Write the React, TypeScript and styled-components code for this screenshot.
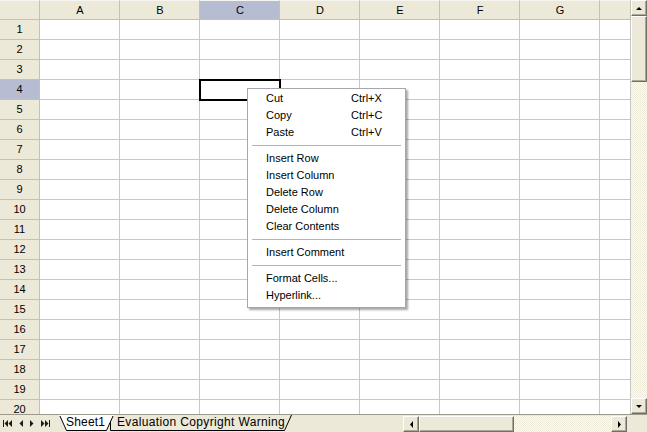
import React from "react";
import styled, { createGlobalStyle, css } from "styled-components";

const GlobalStyle = createGlobalStyle`
	html, body {
		margin: 0;
		padding: 0;
		overflow: hidden;
		background: #fff;
	}
	* {
		box-sizing: border-box;
	}
`;

const COLUMNS = ["A", "B", "C", "D", "E", "F", "G", ""];
const ROW_COUNT = 20;
const SEL_COL = 2;
const SEL_ROW = 4;

const Window = styled.div`
	width: 647px;
	height: 432px;
	display: flex;
	flex-direction: column;
	font-family: "Liberation Sans", Arial, sans-serif;
	background: #fff;
	overflow: hidden;
`;

const Main = styled.div`
	flex: 1;
	display: flex;
	min-height: 0;
`;

const SheetArea = styled.div`
	position: relative;
	width: 631px;
	overflow: hidden;
`;

const Grid = styled.div`
	display: grid;
	grid-template-columns: 40px repeat(7, 80px) 31px;
	grid-auto-rows: 20px;
`;

const headerBase = css<{ $active?: boolean }>`
	display: flex;
	align-items: center;
	justify-content: center;
	font-size: 11px;
	color: #000;
	background: ${(p) => (p.$active ? "#b6bdd2" : "#ece9d8")};
	border-right: 1px solid #c4c1b3;
	border-bottom: 1px solid #c4c1b3;
`;

const Corner = styled.div`
	${headerBase};
	border-top: 1px solid #f6f5ef;
`;

const ColHeader = styled.div<{ $active?: boolean }>`
	${headerBase};
	border-top: 1px solid #f6f5ef;
	padding-left: 1px;
`;

const RowHeader = styled.div<{ $active?: boolean }>`
	${headerBase};
	padding-bottom: 2px;
`;

const Cell = styled.div<{ $selected?: boolean }>`
	border-right: 1px solid #c8c8c8;
	border-bottom: 1px solid #c8c8c8;
	${(p) =>
		p.$selected &&
		css`
			outline: 2px solid #000;
			outline-offset: -1px;
			position: relative;
			z-index: 1;
		`}
`;

const Menu = styled.div`
	position: absolute;
	left: 247px;
	top: 88px;
	width: 159px;
	padding: 1px 0 3px;
	background: #fff;
	border: 1px solid #a7a6aa;
	box-shadow: 2px 2px 2px rgba(0, 0, 0, 0.35);
	z-index: 5;
	font-size: 11px;
	color: #000;
`;

const MenuItem = styled.div`
	display: grid;
	grid-template-columns: 85px 1fr;
	height: 17px;
	align-items: center;
	padding-left: 18px;
	padding-bottom: 1px;
`;

const Separator = styled.div`
	height: 9px;
	display: flex;
	align-items: center;
	padding: 0 4px;

	&::after {
		content: "";
		flex: 1;
		height: 1px;
		background: #b4b4b4;
	}
`;

const VScroll = styled.div`
	width: 16px;
	display: flex;
	flex-direction: column;
	background: repeating-conic-gradient(#ece9d8 0 25%, #fdfdfb 0 50%) 0 0 / 2px 2px;
`;

const scrollPiece = css`
	background: #ece9d8;
	border: 1px solid;
	border-color: #fff #716f64 #716f64 #fff;
	box-shadow: inset -1px -1px 0 #aca899;
	display: flex;
	align-items: center;
	justify-content: center;
`;

const ArrowButton = styled.div`
	${scrollPiece};
	width: 16px;
	height: 16px;
	flex: none;
`;

const VThumb = styled.div`
	${scrollPiece};
	height: 66px;
	flex: none;
`;

const Spacer = styled.div`
	flex: 1;
`;

const TabBar = styled.div`
	height: 18px;
	display: flex;
	align-items: stretch;
	background: #ece9d8;
	border-top: 1px solid #9d9a8c;
	flex: none;
`;

const NavGroup = styled.div`
	display: flex;
	align-items: center;
	width: 59px;
	padding-left: 3px;
	gap: 6px;
	flex: none;
`;

const Tabs = styled.div`
	display: flex;
	width: 344px;
	flex: none;
`;

const Tab = styled.div<{ $active?: boolean; $width: number; $offset: number }>`
	position: relative;
	width: ${(p) => p.$width}px;
	margin-left: ${(p) => p.$offset}px;
	font-size: 12px;
	letter-spacing: ${(p) => (p.$active ? 0.2 : 0.35)}px;
	color: #000;
	padding-left: 7px;
	z-index: ${(p) => (p.$active ? 2 : 1)};
	white-space: nowrap;

	span {
		position: relative;
	}
`;

const TabShape = styled.svg`
	position: absolute;
	left: 0;
	top: 0;
`;

const HScroll = styled.div`
	display: flex;
	align-items: flex-end;
	width: 224px;
	flex: none;
	padding-top: 1px;
`;

const HTrack = styled.div`
	display: flex;
	flex: 1;
	height: 16px;
	background: repeating-conic-gradient(#ece9d8 0 25%, #fdfdfb 0 50%) 0 0 / 2px 2px;
`;

const HThumb = styled.div`
	${scrollPiece};
	width: 95px;
	height: 16px;
`;

const Arrow = ({ dir }: { dir: "up" | "down" | "left" | "right" }) => {
	const paths = {
		up: "M1 4 L4 1 L7 4 Z",
		down: "M1 1 L7 1 L4 4 Z",
		left: "M4 0 L4 7 L1 3.5 Z",
		right: "M1 0 L1 7 L4 3.5 Z",
	};
	const vertical = dir === "up" || dir === "down";
	return (
		<svg width={vertical ? 8 : 5} height={vertical ? 5 : 7} viewBox={vertical ? "0 0 8 5" : "0 0 5 7"}>
			<path d={paths[dir]} fill="#000" />
		</svg>
	);
};

const NavIcon = ({ kind }: { kind: "first" | "prev" | "next" | "last" }) => {
	const d = {
		first: "M0 0 L0 7 L1 7 L1 0 Z M5 0 L5 7 L1.5 3.5 Z M9 0 L9 7 L5.5 3.5 Z",
		prev: "M4 0 L4 7 L0.5 3.5 Z",
		next: "M0 0 L0 7 L3.5 3.5 Z",
		last: "M0 0 L0 7 L3.5 3.5 Z M4 0 L4 7 L7.5 3.5 Z M8 0 L8 7 L9 7 L9 0 Z",
	}[kind];
	const w = kind === "prev" || kind === "next" ? 5 : 10;
	return (
		<svg width={w} height={7} viewBox={`0 0 ${w} 7`}>
			<path d={d} fill="#1a1a1a" />
		</svg>
	);
};

type MenuEntry = { label: string; key?: string } | "sep";

const MENU: MenuEntry[] = [
	{ label: "Cut", key: "Ctrl+X" },
	{ label: "Copy", key: "Ctrl+C" },
	{ label: "Paste", key: "Ctrl+V" },
	"sep",
	{ label: "Insert Row" },
	{ label: "Insert Column" },
	{ label: "Delete Row" },
	{ label: "Delete Column" },
	{ label: "Clear Contents" },
	"sep",
	{ label: "Insert Comment" },
	"sep",
	{ label: "Format Cells..." },
	{ label: "Hyperlink..." },
];

function ContextMenu() {
	return (
		<Menu>
			{MENU.map((m, i) =>
				m === "sep" ? (
					<Separator key={i} />
				) : (
					<MenuItem key={i}>
						<span>{m.label}</span>
						<span>{m.key}</span>
					</MenuItem>
				)
			)}
		</Menu>
	);
}

function Sheet() {
	const rows = Array.from({ length: ROW_COUNT }, (_, i) => i + 1);
	return (
		<SheetArea>
			<Grid>
				<Corner />
				{COLUMNS.map((c, i) => (
					<ColHeader key={i} $active={i === SEL_COL}>
						{c}
					</ColHeader>
				))}
				{rows.map((r) => (
					<React.Fragment key={r}>
						<RowHeader $active={r === SEL_ROW}>{r}</RowHeader>
						{COLUMNS.map((_, c) => (
							<Cell key={c} $selected={r === SEL_ROW && c === SEL_COL} />
						))}
					</React.Fragment>
				))}
			</Grid>
			<ContextMenu />
		</SheetArea>
	);
}

function SheetTab({ label, active, width, offset }: { label: string; active?: boolean; width: number; offset: number }) {
	const h = 17;
	const path = active
		? `M0.5 0 L7.5 ${h - 1.5} L${width - 7.5} ${h - 1.5} L${width - 0.5} 0`
		: `M0.5 0 L0.5 ${h - 1.5} L${width - 7.5} ${h - 1.5} L${width - 0.5} 0`;
	return (
		<Tab $active={active} $width={width} $offset={offset}>
			<TabShape width={width} height={h}>
				<path d={path + (active ? " Z" : "")} fill={active ? "#fff" : "#ece9d8"} stroke="#000" strokeWidth={1} />
				{active && <line x1={0} y1={0.5} x2={width} y2={0.5} stroke="#fff" />}
			</TabShape>
			<span>{label}</span>
		</Tab>
	);
}

export default function App() {
	return (
		<>
			<GlobalStyle />
			<Window>
				<Main>
					<Sheet />
					<VScroll>
						<ArrowButton>
							<Arrow dir="up" />
						</ArrowButton>
						<VThumb />
						<Spacer />
						<ArrowButton>
							<Arrow dir="down" />
						</ArrowButton>
					</VScroll>
				</Main>
				<TabBar>
					<NavGroup>
						<NavIcon kind="first" />
						<NavIcon kind="prev" />
						<NavIcon kind="next" />
						<NavIcon kind="last" />
					</NavGroup>
					<Tabs>
						<SheetTab label="Sheet1" active width={55} offset={0} />
						<SheetTab label="Evaluation Copyright Warning" width={182} offset={-4} />
					</Tabs>
					<HScroll>
						<ArrowButton>
							<Arrow dir="left" />
						</ArrowButton>
						<HTrack>
							<HThumb />
						</HTrack>
						<ArrowButton>
							<Arrow dir="right" />
						</ArrowButton>
					</HScroll>
				</TabBar>
			</Window>
		</>
	);
}
